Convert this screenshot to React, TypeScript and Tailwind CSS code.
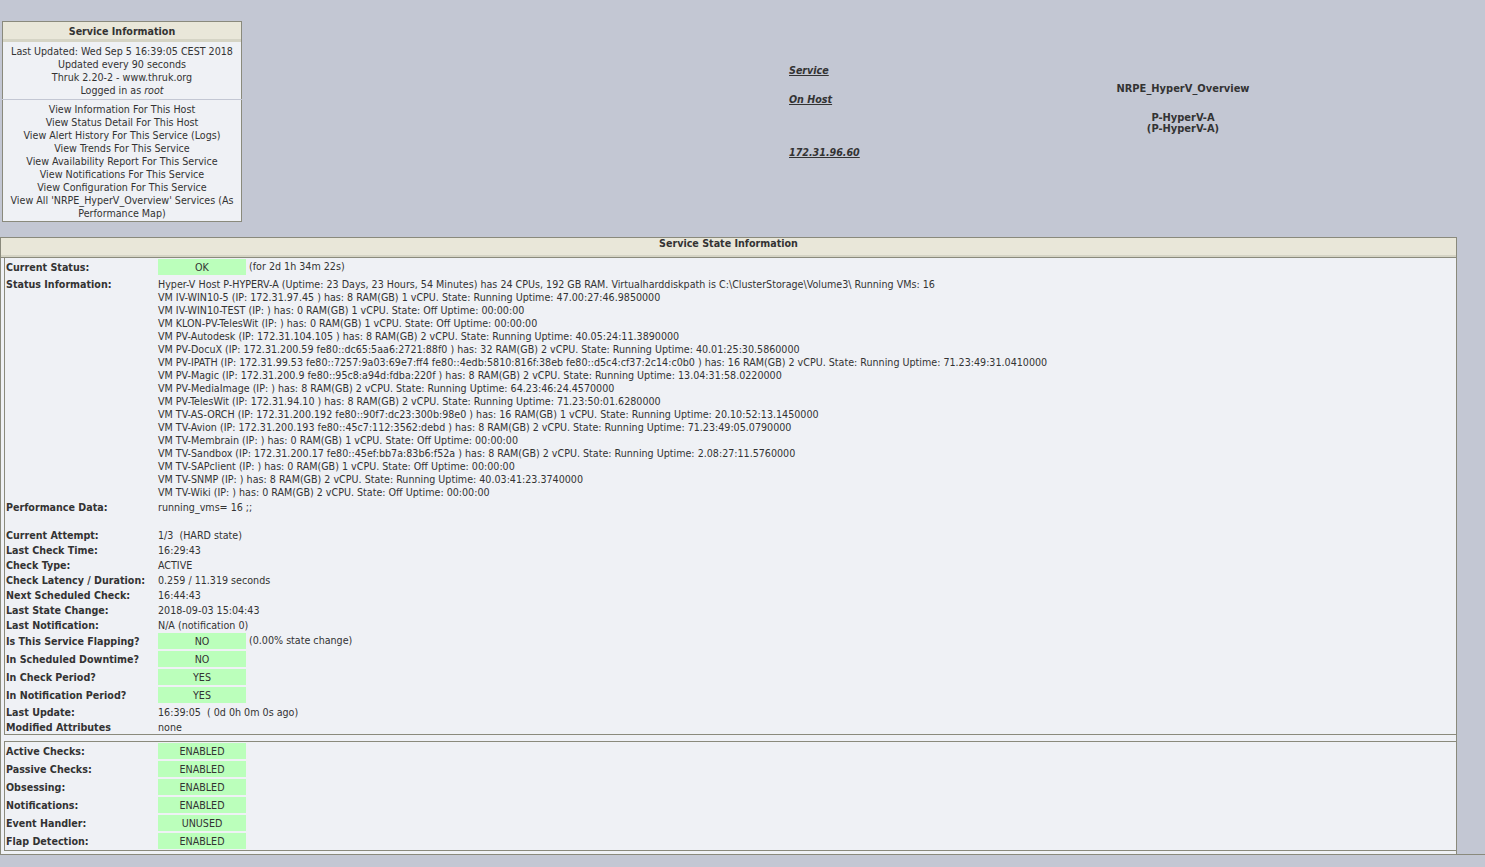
const statusLines = [
  "Hyper-V Host P-HYPERV-A (Uptime: 23 Days, 23 Hours, 54 Minutes) has 24 CPUs, 192 GB RAM. Virtualharddiskpath is C:\\ClusterStorage\\Volume3\\ Running VMs: 16",
  "VM IV-WIN10-5 (IP: 172.31.97.45 ) has: 8 RAM(GB) 1 vCPU. State: Running Uptime: 47.00:27:46.9850000",
  "VM IV-WIN10-TEST (IP: ) has: 0 RAM(GB) 1 vCPU. State: Off Uptime: 00:00:00",
  "VM KLON-PV-TelesWit (IP: ) has: 0 RAM(GB) 1 vCPU. State: Off Uptime: 00:00:00",
  "VM PV-Autodesk (IP: 172.31.104.105 ) has: 8 RAM(GB) 2 vCPU. State: Running Uptime: 40.05:24:11.3890000",
  "VM PV-DocuX (IP: 172.31.200.59 fe80::dc65:5aa6:2721:88f0 ) has: 32 RAM(GB) 2 vCPU. State: Running Uptime: 40.01:25:30.5860000",
  "VM PV-IPATH (IP: 172.31.99.53 fe80::7257:9a03:69e7:ff4 fe80::4edb:5810:816f:38eb fe80::d5c4:cf37:2c14:c0b0 ) has: 16 RAM(GB) 2 vCPU. State: Running Uptime: 71.23:49:31.0410000",
  "VM PV-Magic (IP: 172.31.200.9 fe80::95c8:a94d:fdba:220f ) has: 8 RAM(GB) 2 vCPU. State: Running Uptime: 13.04:31:58.0220000",
  "VM PV-MediaImage (IP: ) has: 8 RAM(GB) 2 vCPU. State: Running Uptime: 64.23:46:24.4570000",
  "VM PV-TelesWit (IP: 172.31.94.10 ) has: 8 RAM(GB) 2 vCPU. State: Running Uptime: 71.23:50:01.6280000",
  "VM TV-AS-ORCH (IP: 172.31.200.192 fe80::90f7:dc23:300b:98e0 ) has: 16 RAM(GB) 1 vCPU. State: Running Uptime: 20.10:52:13.1450000",
  "VM TV-Avion (IP: 172.31.200.193 fe80::45c7:112:3562:debd ) has: 8 RAM(GB) 2 vCPU. State: Running Uptime: 71.23:49:05.0790000",
  "VM TV-Membrain (IP: ) has: 0 RAM(GB) 1 vCPU. State: Off Uptime: 00:00:00",
  "VM TV-Sandbox (IP: 172.31.200.17 fe80::45ef:bb7a:83b6:f52a ) has: 8 RAM(GB) 2 vCPU. State: Running Uptime: 2.08:27:11.5760000",
  "VM TV-SAPclient (IP: ) has: 0 RAM(GB) 1 vCPU. State: Off Uptime: 00:00:00",
  "VM TV-SNMP (IP: ) has: 8 RAM(GB) 2 vCPU. State: Running Uptime: 40.03:41:23.3740000",
  "VM TV-Wiki (IP: ) has: 0 RAM(GB) 2 vCPU. State: Off Uptime: 00:00:00",
];

const sideLinks = [
  "View Information For This Host",
  "View Status Detail For This Host",
  "View Alert History For This Service (Logs)",
  "View Trends For This Service",
  "View Availability Report For This Service",
  "View Notifications For This Service",
  "View Configuration For This Service",
  "View All 'NRPE_HyperV_Overview' Services (As Performance Map)",
];

const checkRows = [
  ["Current Attempt:", "1/3  (HARD state)"],
  ["Last Check Time:", "16:29:43"],
  ["Check Type:", "ACTIVE"],
  ["Check Latency / Duration:", "0.259 / 11.319 seconds"],
  ["Next Scheduled Check:", "16:44:43"],
  ["Last State Change:", "2018-09-03 15:04:43"],
  ["Last Notification:", "N/A (notification 0)"],
];

const flagRows = [
  ["Is This Service Flapping?", "NO", "(0.00% state change)"],
  ["In Scheduled Downtime?", "NO", ""],
  ["In Check Period?", "YES", ""],
  ["In Notification Period?", "YES", ""],
];

const toggleRows = [
  ["Active Checks:", "ENABLED"],
  ["Passive Checks:", "ENABLED"],
  ["Obsessing:", "ENABLED"],
  ["Notifications:", "ENABLED"],
  ["Event Handler:", "UNUSED"],
  ["Flap Detection:", "ENABLED"],
];

function TextRow({ label, value }: { label: string; value: string }) {
  return (
    <div className="flex h-[15px] pt-[2px]">
      <div className="w-[152px] shrink-0 font-bold">{label}</div>
      <div className="whitespace-pre">{value}</div>
    </div>
  );
}

function BadgeRow({ label, value, note }: { label: string; value: string; note?: string }) {
  return (
    <div className="flex h-[18px] items-center">
      <div className="w-[152px] shrink-0 font-bold">{label}</div>
      <div className="flex h-4 w-[88px] items-center justify-center bg-[#bbffbb]">{value}</div>
      {note && <div className="ml-[3px] -mt-[2px]">{note}</div>}
    </div>
  );
}

export default function App() {
  return (
    <div className="min-h-screen bg-[#c3c7d3] text-[10.63px] leading-[13px] text-[#333333] font-['DejaVu_Sans_Condensed','DejaVu_Sans',sans-serif]">
      {/* Top Section */}
      <header className="flex h-[237px]">
        <aside className="ml-[2px] mt-[21px] w-[240px] shrink-0 text-center">
          <div className="border border-[#8a8a7c] bg-[#eff1f5]">
            <div className="flex h-[19px] items-center justify-center border-b-2 border-[#d5d4c5] bg-[#e9e7d9] pt-[2px] font-bold">
              Service Information
            </div>
            <div className="border-t border-[#d5d4c5] px-1 pb-[2px] pt-[3px]">
              <div>Last Updated: Wed Sep 5 16:39:05 CEST 2018</div>
              <div>Updated every 90 seconds</div>
              <div>Thruk 2.20-2 - www.thruk.org</div>
              <div>
                Logged in as <i>root</i>
              </div>
            </div>
          </div>
          <div className="border border-t-0 border-[#8a8a7c] bg-[#eff1f5] px-[6px] pb-[1px] pt-[3px] shadow-[0_-1px_0_#c3c7d3]">
            {sideLinks.map((link) => (
              <div key={link}>{link}</div>
            ))}
          </div>
        </aside>

        <div className="ml-[547px] w-[244px] shrink-0 pt-[64px] font-bold italic underline">
          <div>Service</div>
          <div className="mt-4">On Host</div>
          <div className="mt-[40px]">172.31.96.60</div>
        </div>

        <div className="w-[300px] shrink-0 pt-[82px] text-center text-[11px] font-bold">
          <div>NRPE_HyperV_Overview</div>
          <div className="mt-[17px] leading-[11px]">
            P-HyperV-A
            <br />
            (P-HyperV-A)
          </div>
        </div>
      </header>

      {/* Service State Section */}
      <div className="border-b border-[#8a8a7c]">
        <section className="w-[1457px] border-x border-t border-[#8a8a7c]">
          <div className="h-[19px] border-b-[2px] border-[#d5d4c5] bg-[#e9e7d9] text-center font-bold leading-[11px]">
            Service State Information
          </div>
          <div className="border-t border-[#8a8a7c] bg-[#eff1f5] pb-[3px] pl-[3px]">
            <div className="border-b border-l border-[#8a8a7c] pl-[1px]">
              <BadgeRow label="Current Status:" value="OK" note="(for 2d 1h 34m 22s)" />
              <div className="flex pt-[2px]">
                <div className="w-[152px] shrink-0 font-bold">Status Information:</div>
                <div>
                  {statusLines.map((line) => (
                    <div key={line}>{line}</div>
                  ))}
                </div>
              </div>
              <TextRow label="Performance Data:" value="running_vms= 16 ;;" />
              <div className="h-[13px]" />
              {checkRows.map(([label, value]) => (
                <TextRow key={label} label={label} value={value} />
              ))}
              {flagRows.map(([label, value, note]) => (
                <BadgeRow key={label} label={label} value={value} note={note} />
              ))}
              <TextRow label="Last Update:" value="16:39:05  ( 0d 0h 0m 0s ago)" />
              <TextRow label="Modified Attributes" value="none" />
            </div>
            <div className="mt-[6px] border-y border-l border-[#8a8a7c] pl-[1px]">
              {toggleRows.map(([label, value]) => (
                <BadgeRow key={label} label={label} value={value} />
              ))}
            </div>
          </div>
        </section>
      </div>
    </div>
  );
}
